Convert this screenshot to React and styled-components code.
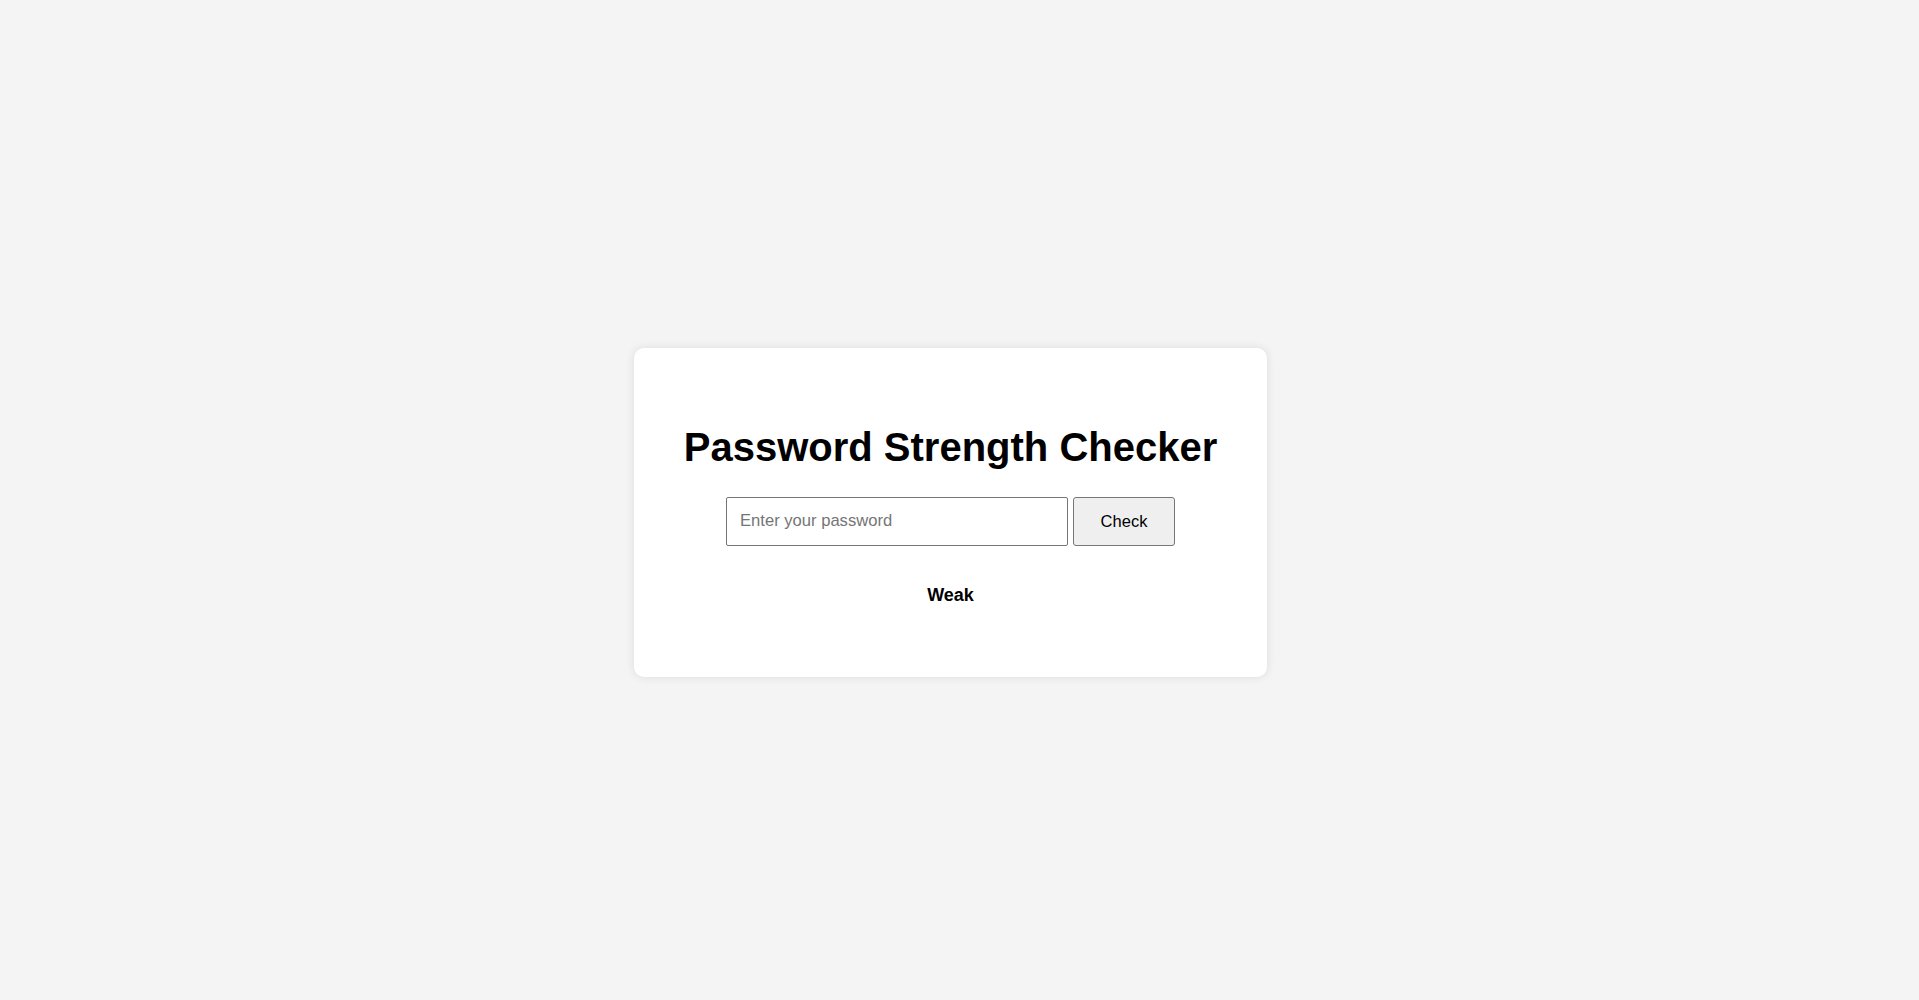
import React, { useState } from "react";
import styled, { createGlobalStyle } from "styled-components";

const GlobalStyle = createGlobalStyle`
  html {
    background: #f4f4f4;
  }
  body {
    margin: 8px;
    background: #f4f4f4;
    font-family: "Liberation Sans", Arial, sans-serif;
    color: #000;
  }
`;

// right padding leaves room where the browser's scrollbar sits in the reference
const Page = styled.main`
  display: flex;
  align-items: center;
  justify-content: center;
  min-height: 100vh;
  padding: 4.5px 18px 4.5px 0;
`;

const Card = styled.section`
  background: #ffffff;
  padding: 50px;
  border-radius: 10px;
  box-shadow: 0 0 10px rgba(0, 0, 0, 0.1);
  text-align: center;
`;

const Title = styled.h1`
  font-size: 40px;
  font-weight: 700;
  margin: 26.8px 0;
  line-height: normal;
  white-space: nowrap;
`;

const Row = styled.div`
  display: flex;
  justify-content: center;
  gap: 5px;
`;

const PasswordInput = styled.input`
  box-sizing: border-box;
  width: 342px;
  height: 49px;
  padding: 0 13px;
  font-family: "Liberation Sans", Arial, sans-serif;
  font-size: 16.6px;
  color: #000;
  background: #fff;
  border: 1px solid #767676;
  border-radius: 2px;
  outline: none;

  &::placeholder {
    color: #757575;
  }
`;

const CheckButton = styled.button`
  box-sizing: border-box;
  width: 102px;
  height: 49px;
  font-family: "Liberation Sans", Arial, sans-serif;
  font-size: 16.5px;
  color: #000;
  background: #efefef;
  border: 1px solid #767676;
  border-radius: 3px;
  cursor: pointer;
`;

const Strength = styled.p`
  font-size: 18px;
  font-weight: 700;
  line-height: normal;
  margin: 39px 0 21px;
`;

const rate = (pw) => {
  let score = 0;
  if (pw.length >= 8) score++;
  if (/[A-Z]/.test(pw)) score++;
  if (/[0-9]/.test(pw)) score++;
  if (/[^A-Za-z0-9]/.test(pw)) score++;
  if (score >= 4) return "Strong";
  if (score >= 2) return "Medium";
  return "Weak";
};

const App = () => {
  const [password, setPassword] = useState("");
  const [result, setResult] = useState("Weak");

  return (
    <>
      <GlobalStyle />
      <Page>
        <Card>
          <Title>Password Strength Checker</Title>
          <Row>
            <PasswordInput
              type="password"
              placeholder="Enter your password"
              value={password}
              onChange={(e) => setPassword(e.target.value)}
            />
            <CheckButton onClick={() => setResult(rate(password))}>
              Check
            </CheckButton>
          </Row>
          <Strength>{result}</Strength>
        </Card>
      </Page>
    </>
  );
};

export default App;
